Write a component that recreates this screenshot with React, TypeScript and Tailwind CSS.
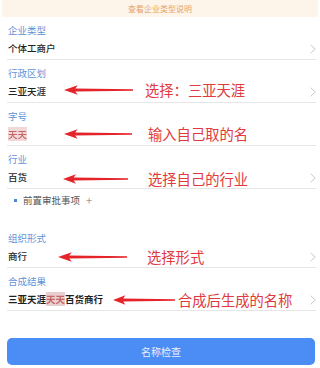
import React from "react";

const font = { fontFamily: '"Noto Sans CJK SC", "Noto Sans", sans-serif' };

function Chevron() {
  return (
    <svg width="6" height="10" viewBox="0 0 6 10" className="shrink-0">
      <path d="M0.7 0.7 L5.2 5 L0.7 9.3" fill="none" stroke="#c9c9c9" strokeWidth="1" />
    </svg>
  );
}

function Arrow({ className }: { className: string }) {
  return (
    <svg viewBox="0 0 70 10" preserveAspectRatio="none" className={className}>
      <polygon points="0,5 14,0.2 11.5,3.5 70,4.2 70,5.8 11.5,6.5 14,9.8" fill="#e5242a" />
    </svg>
  );
}

function Note({
  pos,
  arrow,
  gap,
  text,
}: {
  pos: string;
  arrow: string;
  gap: string;
  text: string;
}) {
  return (
    <div className={`absolute flex items-center ${pos} ${gap} pointer-events-none`}>
      <Arrow className={`h-[10px] ${arrow}`} />
      <span className="text-[14.3px] leading-[18px] text-[#e03a3e] whitespace-nowrap">{text}</span>
    </div>
  );
}

function Field({
  label,
  children,
  chevron = true,
  note,
}: {
  label: string;
  children: React.ReactNode;
  chevron?: boolean;
  note?: React.ReactNode;
}) {
  return (
    <div className="relative h-[43px] border-b border-[#e6e6e6] pl-px">
      <div className="pt-[7px] text-[9.5px] leading-[12px] text-[#5f93d8]">{label}</div>
      <div className="mt-[6px] flex items-center justify-between h-[13px]">
        <div className="text-[9.5px] leading-[13px] font-medium text-[#1f1f1f]">{children}</div>
        {chevron && <Chevron />}
      </div>
      {note}
    </div>
  );
}

export default function App() {
  return (
    <div className="w-[320px] h-[368px] bg-white overflow-hidden" style={font}>
      {/* banner */}
      <div className="h-[17px] mx-[2px] bg-[#fdf4ea] flex items-center justify-center">
        <span className="text-[8px] leading-[10px] text-[#e6a466]">查看企业类型说明</span>
      </div>

      <div className="ml-[7px] mr-[4px]">
        <Field label="企业类型">个体工商户</Field>
        <Field
          label="行政区划"
          note={
            <Note
              pos="left-[57px] top-[21px]"
              arrow="w-[69px]"
              gap="gap-[12px]"
              text="选择：三亚天涯"
            />
          }
        >
          三亚天涯
        </Field>
        <Field
          label="字号"
          chevron={false}
          note={
            <Note
              pos="left-[57px] top-[22px]"
              arrow="w-[68px]"
              gap="gap-[16px]"
              text="输入自己取的名"
            />
          }
        >
          <span className="text-[#c46666] bg-[#f1d9d9] blur-[0.3px]">天天</span>
        </Field>
        <Field
          label="行业"
          note={
            <Note
              pos="left-[56px] top-[24px]"
              arrow="w-[65px]"
              gap="gap-[20px]"
              text="选择自己的行业"
            />
          }
        >
          百货
        </Field>

        <div className="h-[22px] flex items-center pl-[7px] gap-[6px]">
          <span className="w-[3px] h-[3px] bg-[#4f86d6]" />
          <span className="text-[9.5px] leading-[12px] text-[#555]">前置审批事项</span>
          <span className="text-[11px] leading-[12px] text-[#999]">+</span>
        </div>

        <div className="h-[14px]" />

        <Field
          label="组织形式"
          note={
            <Note
              pos="left-[51px] top-[23px]"
              arrow="w-[69px]"
              gap="gap-[20px]"
              text="选择形式"
            />
          }
        >
          商行
        </Field>
        <Field
          label="合成结果"
          note={
            <Note
              pos="left-[106px] top-[23px]"
              arrow="w-[62px]"
              gap="gap-[3px]"
              text="合成后生成的名称"
            />
          }
        >
          <span className="font-bold">
            三亚天涯
            <span className="text-[#c46666] bg-[#e9cfcf] blur-[0.3px]">天天</span>
            百货商行
          </span>
        </Field>

        <div className="mt-[27px] mr-px h-[27px] rounded-[5px] bg-[#4b8df4] flex items-center justify-center">
          <span className="text-[10px] leading-[12px] text-[#e8f0ff]">名称检查</span>
        </div>
      </div>
    </div>
  );
}
